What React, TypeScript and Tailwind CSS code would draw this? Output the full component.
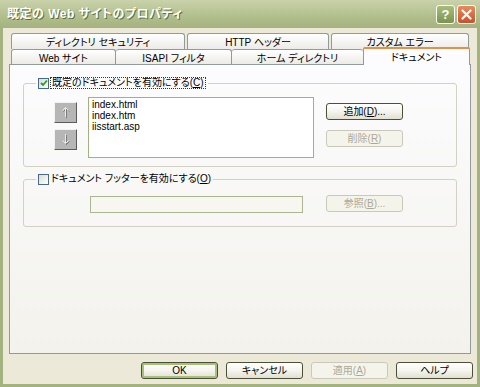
import React from "react";

const jp = "font-['Liberation_Sans','Noto_Sans_CJK_JP',sans-serif] [font-feature-settings:'palt']";

function TitleButton({ kind }: { kind: "help" | "close" }) {
  return (
    <div
      className={`w-[19px] h-[19px] rounded-[3px] border border-white flex items-center justify-center ${
        kind === "help"
          ? "bg-linear-to-b from-[#a9bd7a] to-[#7c9450]"
          : "bg-linear-to-b from-[#e98a5e] to-[#c9502c]"
      }`}
    >
      {kind === "help" ? (
        <span className="text-white font-bold text-[13px] leading-none font-['Liberation_Sans',sans-serif]">?</span>
      ) : (
        <svg width="11" height="11" viewBox="0 0 11 11">
          <path d="M1.5 1.5 L9.5 9.5 M9.5 1.5 L1.5 9.5" stroke="white" strokeWidth="2.2" strokeLinecap="round" />
        </svg>
      )}
    </div>
  );
}

function Checkbox({ checked }: { checked?: boolean }) {
  return (
    <div className="w-[11px] h-[11px] border border-[#46698c] bg-linear-to-br from-[#dcdcd4] to-white flex items-center justify-center">
      {checked && (
        <svg width="8" height="8" viewBox="0 0 8 8">
          <path d="M1 4 L3 6 L7 1.5" stroke="#21a121" strokeWidth="1.8" fill="none" />
        </svg>
      )}
    </div>
  );
}

function Arrow({ up }: { up?: boolean }) {
  const d = up ? "M4.5 1.5 L4.5 11 M1.5 4.5 L4.5 1.5 L7.5 4.5" : "M4.5 1 L4.5 10.5 M1.5 7.5 L4.5 10.5 L7.5 7.5";
  return (
    <div className="w-[23px] h-[21px] bg-[#b6b6b6] border border-t-[#f2f2f2] border-l-[#f2f2f2] border-r-[#5c5c5c] border-b-[#5c5c5c] flex items-center justify-center">
      <svg width="10" height="13" viewBox="0 0 10 13">
        <g transform="translate(1,1)">
          <path d={d} stroke="#7a7a7a" strokeWidth="1" fill="none" />
        </g>
        <path d={d} stroke="#ececec" strokeWidth="1" fill="none" />
      </svg>
    </div>
  );
}

function Button({
  children,
  disabled,
  primary,
  className = "",
}: {
  children: React.ReactNode;
  disabled?: boolean;
  primary?: boolean;
  className?: string;
}) {
  return (
    <div
      className={`w-[77px] h-[17px] rounded-[3px] border flex items-center justify-center text-[10px] leading-none ${jp} ${
        disabled
          ? "border-[#cac8bb] bg-[#f5f4ea] text-[#aca899]"
          : "border-[#4a4f36] bg-linear-to-b from-white via-[#f5f4ee] to-[#e2e0d1] text-black"
      } ${primary ? "shadow-[inset_0_0_0_2px_#a7c07c]" : ""} ${className}`}
    >
      {children}
    </div>
  );
}

export default function App() {
  return (
    <div className={`w-[480px] h-[387px] bg-[#a3b27e] flex flex-col ${jp}`}>
      {/* title bar */}
      <div className="h-[28px] flex items-center justify-between bg-linear-to-b from-[#c9d2aa] via-[#b4c190] to-[#a4b27e] pl-[7px] pr-[4px]">
        <span className="text-white font-bold text-[12px] tracking-[0.5px] [text-shadow:1px_1px_0_#5f6d3c]">
          既定の Web サイトのプロパティ
        </span>
        <div className="flex gap-[2px]">
          <TitleButton kind="help" />
          <TitleButton kind="close" />
        </div>
      </div>

      {/* body */}
      <div className="flex-1 mx-[3px] mb-[3px] bg-[#ece9d8] px-[6px] pt-[5px] flex flex-col">
        {/* back tab row */}
        <div className="flex ml-[2px] gap-[2px] h-[16px] text-[10px] text-black">
          <div className="w-[174px] border border-b-0 border-[#919b9c] rounded-t-[3px] bg-linear-to-b from-white to-[#ecebe6] flex justify-center pt-[1px]">
            ディレクトリ セキュリティ
          </div>
          <div className="w-[142px] border border-b-0 border-[#919b9c] rounded-t-[3px] bg-linear-to-b from-white to-[#ecebe6] flex justify-center pt-[1px]">
            HTTP ヘッダー
          </div>
          <div className="w-[138px] border border-b-0 border-[#919b9c] rounded-t-[3px] bg-linear-to-b from-white to-[#ecebe6] flex justify-center pt-[1px]">
            カスタム エラー
          </div>
        </div>

        {/* front tab row */}
        <div className="flex ml-[2px] h-[15px] items-end text-[10px] text-black">
          <div className="w-[105px] h-[15px] border border-b-0 border-[#919b9c] rounded-t-[3px] bg-linear-to-b from-white to-[#ecebe6] flex justify-center pt-[1px]">
            Web サイト
          </div>
          <div className="w-[116px] h-[15px] border-t border-r border-[#919b9c] rounded-t-[3px] bg-linear-to-b from-white to-[#ecebe6] flex justify-center pt-[1px]">
            ISAPI フィルタ
          </div>
          <div className="w-[131px] h-[15px] border-t border-[#919b9c] rounded-t-[3px] bg-linear-to-b from-white to-[#ecebe6] flex justify-center pt-[1px]">
            ホーム ディレクトリ
          </div>
          <div className="relative z-10 w-[107px] h-[18px] -mb-px border-l border-r border-[#919b9c] rounded-t-[3px] bg-[#fcfcfe] flex flex-col">
            <div className="h-[2px] bg-[#e3914a] rounded-t-[2px] -mx-px" />
            <div className="flex justify-center pt-px">ドキュメント</div>
          </div>
        </div>

        {/* panel */}
        <div className="h-[290px] border border-[#919b9c] bg-linear-to-b from-[#fcfcfe] to-[#f3f2ec] px-[13px] pt-[12px] text-[10px] text-black">
          <fieldset className="border border-[#d3d1c4] rounded-[3px] pb-[8px]">
            <legend className="ml-[12px] px-[2px] h-[12px] flex items-center gap-[1px]">
              <Checkbox checked />
              <span className="border border-dotted border-[#333] px-px leading-[10px]">
                既定のドキュメントを有効にする(<u>C</u>)
              </span>
            </legend>
            <div className="flex items-start pl-[30px]">
              <div className="flex flex-col gap-[6px] mt-[13px]">
                <Arrow up />
                <Arrow />
              </div>
              <div className="ml-[11px] mt-[8px] w-[226px] h-[61px] border border-[#a2b184] bg-white pl-[3px] pt-[1px] text-[10px] leading-[11px] font-['Liberation_Sans',sans-serif]">
                <div>index.html</div>
                <div>index.htm</div>
                <div>iisstart.asp</div>
              </div>
              <div className="ml-[12px] mt-[14px] flex flex-col gap-[10px]">
                <Button>
                  追加(<u>D</u>)...
                </Button>
                <Button disabled>
                  削除(<u>R</u>)
                </Button>
              </div>
            </div>
          </fieldset>

          <fieldset className="mt-[6px] border border-[#d3d1c4] rounded-[3px] pb-[13px]">
            <legend className="ml-[12px] px-[2px] h-[12px] flex items-center gap-[2px]">
              <Checkbox />
              <span className="leading-[10px]">
                ドキュメント フッターを有効にする(<u>O</u>)
              </span>
            </legend>
            <div className="flex items-start pl-[66px]">
              <div className="mt-[11px] w-[213px] h-[17px] border border-[#a9b68f] bg-[#f7f6f1]" />
              <Button disabled className="ml-[23px] mt-[10px]">
                参照(<u>B</u>)...
              </Button>
            </div>
          </fieldset>
        </div>

        {/* dialog buttons */}
        <div className="flex justify-end gap-[8px] mt-[8px] pr-[4px] -mr-[6px]">
          <Button primary>OK</Button>
          <Button>キャンセル</Button>
          <Button disabled>
            適用(<u>A</u>)
          </Button>
          <Button>ヘルプ</Button>
        </div>
      </div>
    </div>
  );
}
